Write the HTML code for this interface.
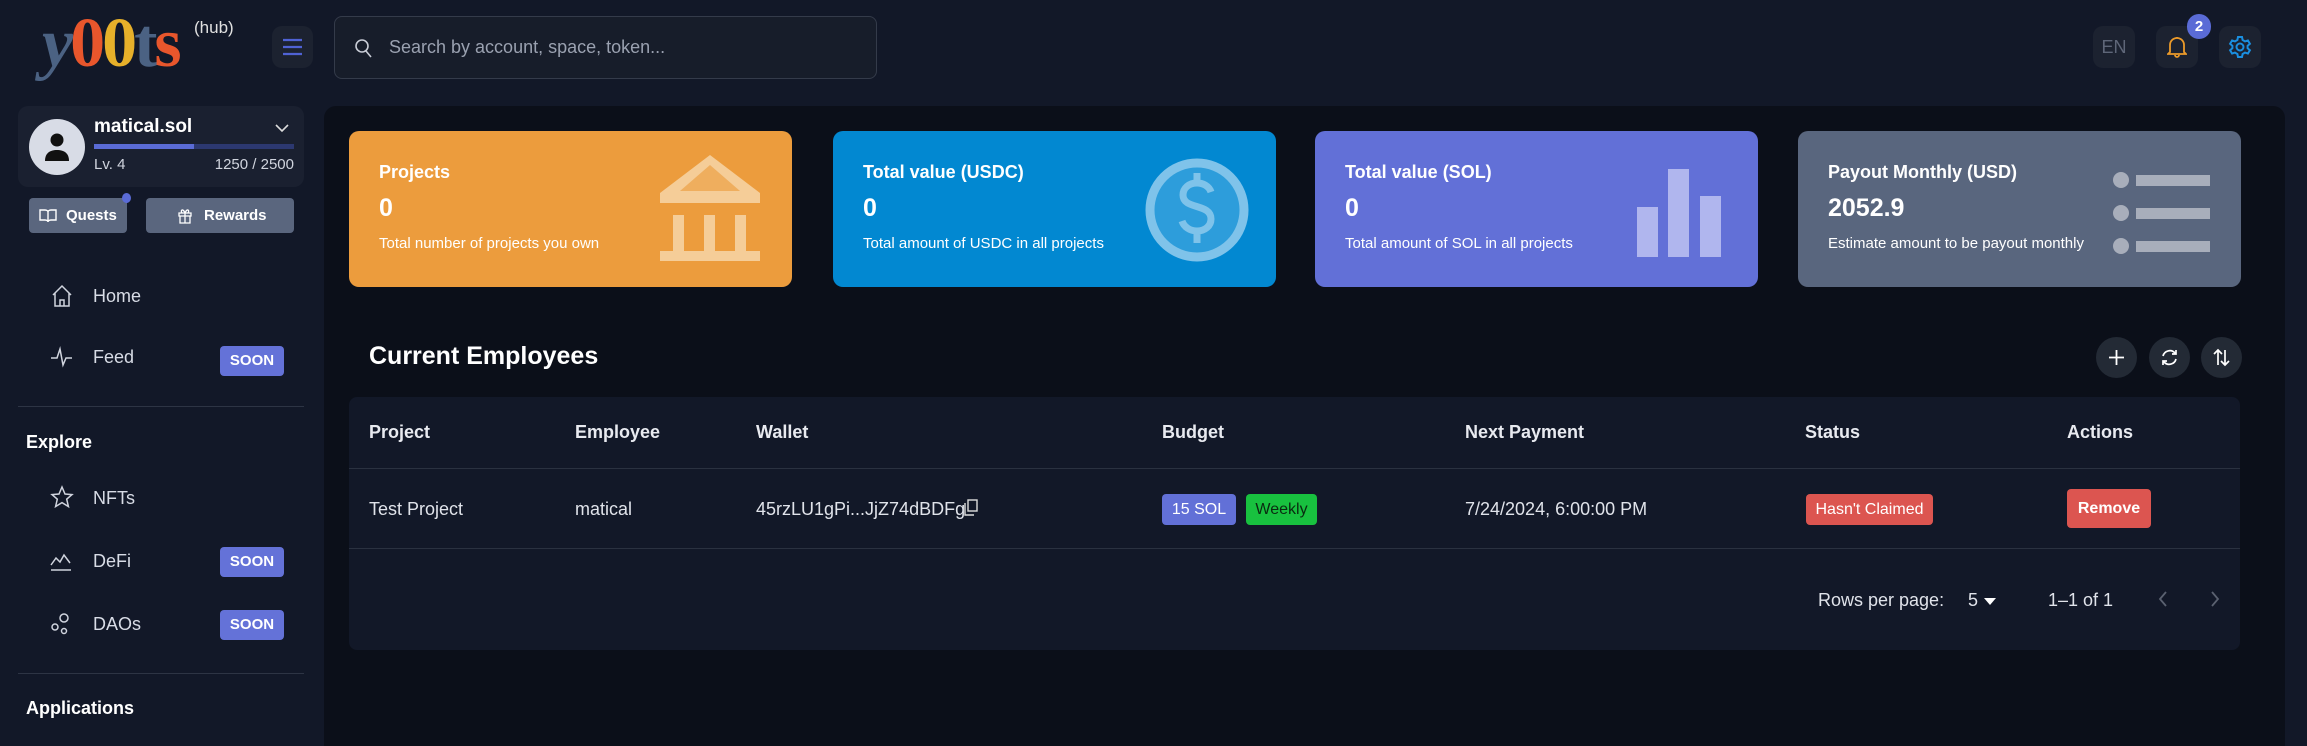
<!DOCTYPE html>
<html><head><meta charset="utf-8"><style>
*{box-sizing:border-box;margin:0;padding:0}
body{width:2307px;height:722px;overflow:hidden;background:#121828;font-family:"Liberation Sans",sans-serif;color:#e8eaf0;position:relative}
.a{position:absolute}
.ib{position:absolute;background:#1c2230;border-radius:10px}
.card{position:absolute;top:131px;width:443px;height:156px;border-radius:10px;color:#fff}
.card .t{position:absolute;left:30px;top:31px;font-size:18px;font-weight:bold}
.card .n{position:absolute;left:30px;top:63px;font-size:25px;font-weight:bold}
.card .d{position:absolute;left:30px;top:104px;font-size:15px}
.nav{position:absolute;left:50px;font-size:18px;color:#d8dce6}
.nav svg{position:absolute;left:0;top:-3px}
.nav span{position:absolute;left:43px;top:0}
.soon{position:absolute;left:220px;width:64px;height:30px;background:#6472d8;border-radius:4px;color:#fff;font-size:15px;font-weight:bold;text-align:center;line-height:30px}
.th{position:absolute;top:422px;font-size:18px;font-weight:bold;color:#e8eaf0}
.td{position:absolute;top:499px;font-size:18px;color:#e0e3ea}
.cb{position:absolute;top:337px;width:41px;height:41px;border-radius:50%;background:#232a35}
</style></head><body>
<!-- logo -->
<div class="a" style="left:42px;top:8px;font-family:'Liberation Serif',serif;font-weight:bold;font-size:70px;letter-spacing:-3px;line-height:72px">
<span style="color:#4b6283;font-style:italic">y</span><span style="color:#e8562c">0</span><span style="color:#e6b02a">0</span><span style="color:#4b6283">t</span><span style="color:#e8562c">s</span>
</div>
<div class="a" style="left:194px;top:18px;font-size:17px;color:#e0e0e0;font-family:'Liberation Sans',sans-serif">(hub)</div>
<div class="ib" style="left:272px;top:26px;width:41px;height:42px">
<svg class="a" style="left:11px;top:12px" width="19" height="18"><path d="M0 2h19M0 9h19M0 16h19" stroke="#4f62d4" stroke-width="2.2"/></svg></div>
<div class="a" style="left:334px;top:16px;width:543px;height:63px;border:1px solid #343b4a;border-radius:8px;background:#171d2a">
<svg class="a" style="left:20px;top:22px" width="18" height="20"><circle cx="7" cy="7" r="6" fill="none" stroke="#c8ccd6" stroke-width="1.6"/><path d="M11 12l5 6" stroke="#c8ccd6" stroke-width="1.6"/></svg>
<div class="a" style="left:54px;top:20px;font-size:18px;color:#9aa1b0">Search by account, space, token...</div></div>
<div class="ib" style="left:2093px;top:26px;width:42px;height:42px;font-size:18px;color:#5e6678;text-align:center;line-height:42px">EN</div>
<div class="ib" style="left:2156px;top:26px;width:42px;height:42px">
<svg class="a" style="left:11px;top:9px" width="20" height="24"><path d="M3 17V10a7 7 0 0114 0v7l2 2H1zM8 20a2 2 0 004 0M10 2v1" fill="none" stroke="#eb9a2a" stroke-width="1.8"/></svg></div>
<div class="a" style="left:2187px;top:14px;width:24px;height:25px;border-radius:12px;background:#5a6bd6;color:#fff;font-size:15px;font-weight:bold;text-align:center;line-height:25px">2</div>
<div class="ib" style="left:2219px;top:26px;width:42px;height:42px">
<svg class="a" style="left:9px;top:9px" width="24" height="24" viewBox="0 0 24 24"><path d="M10 2h4l.6 3 2.4 1.4 2.9-1 2 3.4-2.3 2v2.4l2.3 2-2 3.4-2.9-1L14.6 19 14 22h-4l-.6-3-2.4-1.4-2.9 1-2-3.4 2.3-2v-2.4l-2.3-2 2-3.4 2.9 1L9.4 5z" fill="none" stroke="#1a8fe0" stroke-width="2"/><circle cx="12" cy="12" r="3.5" fill="none" stroke="#1a8fe0" stroke-width="2"/></svg></div>

<!-- sidebar -->
<div class="a" style="left:18px;top:106px;width:286px;height:81px;background:#1a2030;border-radius:10px">
<div class="a" style="left:11px;top:13px;width:56px;height:56px;border-radius:50%;background:#d8dce6">
<svg class="a" style="left:14px;top:12px" width="28" height="32"><circle cx="14" cy="9" r="6.5" fill="#111"/><path d="M2 30c0-8 5-11 12-11s12 3 12 11z" fill="#111"/></svg></div>
<div class="a" style="left:76px;top:10px;font-size:19px;font-weight:bold;color:#fff">matical.sol</div>
<svg class="a" style="left:257px;top:18px" width="14" height="9"><path d="M1 1l6 6 6-6" fill="none" stroke="#ddd" stroke-width="1.6"/></svg>
<div class="a" style="left:76px;top:38px;width:200px;height:5px;background:#2c3870"><div style="width:100px;height:5px;background:#5a6bd6"></div></div>
<div class="a" style="left:76px;top:50px;font-size:15px;color:#d0d4de">Lv. 4</div>
<div class="a" style="right:10px;top:50px;font-size:15px;color:#d0d4de">1250 / 2500</div></div>
<div class="a" style="left:29px;top:198px;width:98px;height:35px;background:#5a667e;border-radius:4px;font-size:15px;font-weight:bold;color:#fff;line-height:35px;padding-left:37px">Quests
<svg class="a" style="left:10px;top:10px" width="18" height="15"><path d="M1 2h5c2 0 3 1 3 2v10c0-1-1-2-3-2H1zM17 2h-5c-2 0-3 1-3 2v10c0-1 1-2 3-2h5z" fill="none" stroke="#fff" stroke-width="1.4"/></svg></div>
<div class="a" style="left:122px;top:193px;width:9px;height:10px;border-radius:50%;background:#5a6bd6"></div>
<div class="a" style="left:146px;top:198px;width:148px;height:35px;background:#5a667e;border-radius:4px;font-size:15px;font-weight:bold;color:#fff;line-height:35px;padding-left:58px">Rewards
<svg class="a" style="left:31px;top:9px" width="16" height="17"><path d="M2 6h12v3H2zM3 9h10v7H3zM8 6v10M8 6C6 1 3 3 5 6M8 6c2-5 5-3 3 0" fill="none" stroke="#fff" stroke-width="1.3"/></svg></div>

<div class="nav" style="top:286px"><svg width="24" height="26"><path d="M3 12L12 3l9 9M5 10v13h14V10M10 23v-6h4v6" fill="none" stroke="#d0d4de" stroke-width="1.5"/></svg><span>Home</span></div>
<div class="nav" style="top:347px"><svg width="24" height="26"><path d="M1 14h6l3-9 3 16 3-7h6" fill="none" stroke="#d0d4de" stroke-width="1.5"/></svg><span>Feed</span></div>
<div class="soon" style="top:346px">SOON</div>
<div class="a" style="left:18px;top:406px;width:286px;height:1px;background:#2d3444"></div>
<div class="a" style="left:26px;top:432px;font-size:18px;font-weight:bold;color:#fff">Explore</div>
<div class="nav" style="top:488px"><svg width="24" height="26"><path d="M12 2l3 7 7 .6-5.3 4.6 1.7 7.3L12 17.6 5.6 21.5l1.7-7.3L2 9.6 9 9z" fill="none" stroke="#d0d4de" stroke-width="1.5"/></svg><span>NFTs</span></div>
<div class="nav" style="top:551px"><svg width="24" height="26"><path d="M1 17l5-7 4 4 4-7 6 8M1 22h20" fill="none" stroke="#d0d4de" stroke-width="1.5"/></svg><span>DeFi</span></div>
<div class="soon" style="top:547px">SOON</div>
<div class="nav" style="top:614px"><svg width="24" height="26"><circle cx="14" cy="7" r="4" fill="none" stroke="#d0d4de" stroke-width="1.5"/><circle cx="5" cy="16" r="3" fill="none" stroke="#d0d4de" stroke-width="1.5"/><circle cx="14" cy="20" r="2.5" fill="none" stroke="#d0d4de" stroke-width="1.5"/></svg><span>DAOs</span></div>
<div class="soon" style="top:610px">SOON</div>
<div class="a" style="left:18px;top:673px;width:286px;height:1px;background:#2d3444"></div>
<div class="a" style="left:26px;top:698px;font-size:18px;font-weight:bold;color:#fff">Applications</div>

<!-- main -->
<div class="a" style="left:324px;top:106px;width:1961px;height:640px;background:#0b0f19;border-radius:12px 12px 0 0"></div>
<div class="card" style="left:349px;background:#ec9c3d"><div class="t">Projects</div><div class="n">0</div><div class="d">Total number of projects you own</div>
<svg class="a" style="left:311px;top:24px" width="100" height="106"><path d="M50 0L100 38v10H0V38z" fill="#f5cd98"/><path d="M50 10L80 36H20z" fill="#efae5e"/><rect x="13" y="60" width="11" height="36" fill="#f5cd98"/><rect x="44" y="60" width="11" height="36" fill="#f5cd98"/><rect x="75" y="60" width="11" height="36" fill="#f5cd98"/><rect x="0" y="96" width="100" height="10" fill="#f5cd98"/></svg></div>
<div class="card" style="left:833px;background:#0288d1"><div class="t">Total value (USDC)</div><div class="n">0</div><div class="d">Total amount of USDC in all projects</div>
<svg class="a" style="left:312px;top:26px" width="104" height="106"><circle cx="52" cy="53" r="47" fill="#2d9ddb" stroke="#7fc3ea" stroke-width="9"/><path d="M66 35c-2-6-8-9-14-9-8 0-14 5-14 12 0 15 28 8 28 24 0 7-6 12-14 12-7 0-13-4-15-10M52 16v10M52 74v12" fill="none" stroke="#7fc3ea" stroke-width="7"/></svg></div>
<div class="card" style="left:1315px;background:#6270d7"><div class="t">Total value (SOL)</div><div class="n">0</div><div class="d">Total amount of SOL in all projects</div>
<svg class="a" style="left:322px;top:38px" width="84" height="88"><rect x="0" y="38" width="21" height="50" fill="#b0b6ee"/><rect x="31" y="0" width="21" height="88" fill="#b0b6ee"/><rect x="63" y="27" width="21" height="61" fill="#b0b6ee"/></svg></div>
<div class="card" style="left:1798px;background:#59667e"><div class="t">Payout Monthly (USD)</div><div class="n">2052.9</div><div class="d">Estimate amount to be payout monthly</div>
<svg class="a" style="left:315px;top:40px" width="100" height="85"><g fill="#a8aebb"><circle cx="8" cy="9" r="8"/><rect x="23" y="4" width="74" height="11"/><circle cx="8" cy="42" r="8"/><rect x="23" y="37" width="74" height="11"/><circle cx="8" cy="75" r="8"/><rect x="23" y="70" width="74" height="11"/></g></svg></div>

<div class="a" style="left:369px;top:342px;font-size:25px;font-weight:bold;color:#fff">Current Employees</div>
<div class="cb" style="left:2096px"><svg class="a" style="left:12px;top:12px" width="17" height="17"><path d="M8.5 1v15M1 8.5h15" stroke="#fff" stroke-width="1.8"/></svg></div>
<div class="cb" style="left:2149px"><svg class="a" style="left:11px;top:11px" width="19" height="19"><path d="M3 8a7 7 0 0112-3l1 1M16 11a7 7 0 01-12 3l-1-1M16 2v4h-4M3 17v-4h4" fill="none" stroke="#fff" stroke-width="1.7"/></svg></div>
<div class="cb" style="left:2201px"><svg class="a" style="left:11px;top:11px" width="19" height="19"><path d="M6 17V2M2 6l4-4 4 4M13 2v15M9 13l4 4 4-4" fill="none" stroke="#fff" stroke-width="1.7"/></svg></div>

<div class="a" style="left:349px;top:397px;width:1891px;height:253px;background:#121828;border-radius:8px"></div>
<div class="a" style="left:349px;top:468px;width:1891px;height:1px;background:#2a3140"></div>
<div class="a" style="left:349px;top:548px;width:1891px;height:1px;background:#2a3140"></div>
<div class="th" style="left:369px">Project</div>
<div class="th" style="left:575px">Employee</div>
<div class="th" style="left:756px">Wallet</div>
<div class="th" style="left:1162px">Budget</div>
<div class="th" style="left:1465px">Next Payment</div>
<div class="th" style="left:1805px">Status</div>
<div class="th" style="left:2067px">Actions</div>
<div class="td" style="left:369px">Test Project</div>
<div class="td" style="left:575px">matical</div>
<div class="td" style="left:756px">45rzLU1gPi...JjZ74dBDFg</div>
<svg class="a" style="left:964px;top:499px" width="14" height="17"><rect x="4" y="1" width="9" height="11" fill="none" stroke="#ddd" stroke-width="1.4"/><path d="M1 4v12h9" fill="none" stroke="#ddd" stroke-width="1.4"/></svg>
<div class="a" style="left:1162px;top:494px;width:74px;height:31px;background:#6270d7;border-radius:4px;color:#fff;font-size:16px;text-align:center;line-height:31px">15 SOL</div>
<div class="a" style="left:1246px;top:494px;width:71px;height:31px;background:#18c13f;border-radius:4px;color:#0a2a10;font-size:16px;text-align:center;line-height:31px">Weekly</div>
<div class="td" style="left:1465px">7/24/2024, 6:00:00 PM</div>
<div class="a" style="left:1806px;top:494px;width:127px;height:31px;background:#dc5550;border-radius:4px;color:#fff;font-size:16px;text-align:center;line-height:31px">Hasn't Claimed</div>
<div class="a" style="left:2067px;top:489px;width:84px;height:39px;background:#dc5550;border-radius:4px;color:#fff;font-size:16px;font-weight:bold;text-align:center;line-height:39px">Remove</div>
<div class="a" style="left:1818px;top:590px;font-size:18px;color:#e0e3ea">Rows per page:</div>
<div class="a" style="left:1968px;top:590px;font-size:18px;color:#e0e3ea">5</div>
<svg class="a" style="left:1984px;top:598px" width="12" height="7"><path d="M0 0h12L6 7z" fill="#fff"/></svg>
<div class="a" style="left:2048px;top:590px;font-size:18px;color:#e0e3ea">1–1 of 1</div>
<svg class="a" style="left:2158px;top:591px" width="10" height="16"><path d="M8 1L2 8l6 7" fill="none" stroke="#5a6170" stroke-width="1.8"/></svg>
<svg class="a" style="left:2210px;top:591px" width="10" height="16"><path d="M2 1l6 7-6 7" fill="none" stroke="#5a6170" stroke-width="1.8"/></svg>
</body></html>
